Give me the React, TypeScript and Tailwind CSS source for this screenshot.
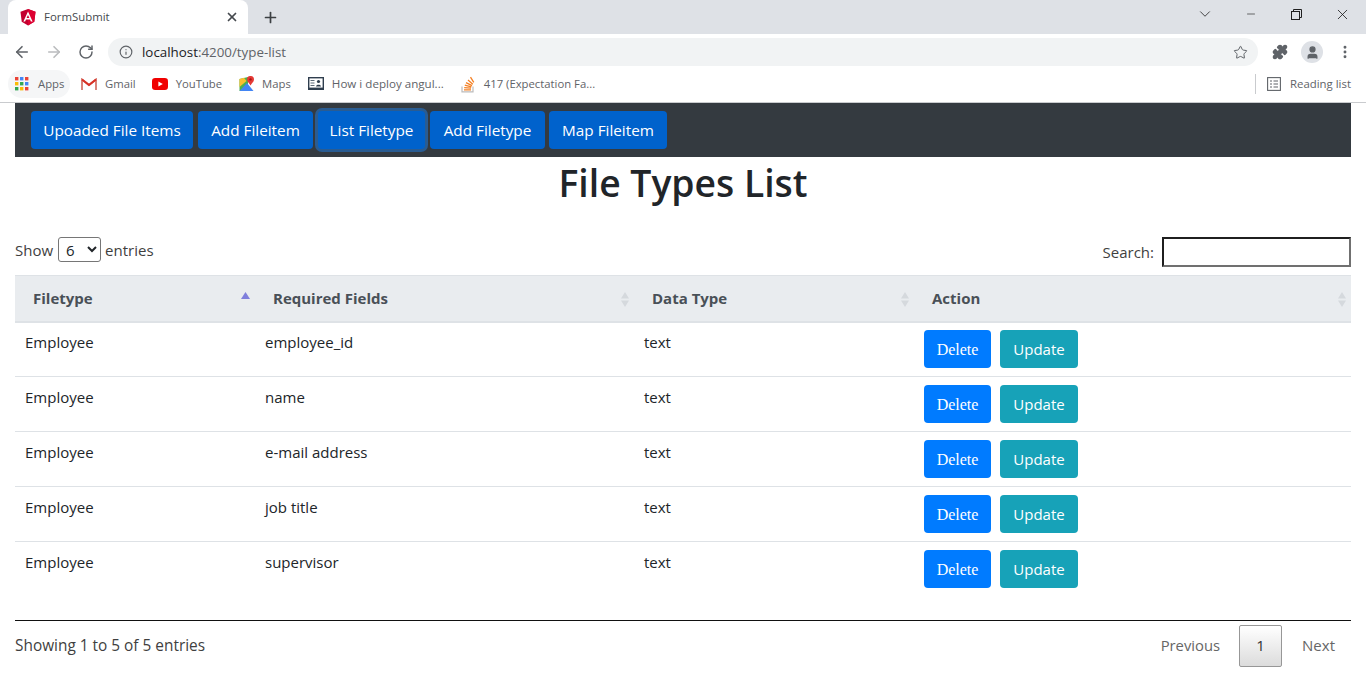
import { ArrowLeft, ArrowRight, RotateCw, Info, Star, X, Plus, ChevronDown, Minus, EllipsisVertical, Puzzle, User } from 'lucide-react';

const NAV_ITEMS = [
   { label: 'Upoaded File Items', width: 'w-[162px]' },
   { label: 'Add Fileitem', width: 'w-[115px]' },
   { label: 'List Filetype', width: 'w-[107px]', focused: true },
   { label: 'Add Filetype', width: 'w-[115px]' },
   { label: 'Map Fileitem', width: 'w-[118px] -ml-px' },
];

const ROWS = ['employee_id', 'name', 'e-mail address', 'job title', 'supervisor'];

const COLUMNS = [
   { label: 'Filetype', width: 'w-[240px]', active: true },
   { label: 'Required Fields', width: 'w-[379px]' },
   { label: 'Data Type', width: 'w-[280px]' },
   { label: 'Action', width: 'w-[437px]' },
];

const AppsIcon = () => (
   <svg width="14" height="14" viewBox="0 0 14 14">
      {[
         ['#ea4335', '#4285f4', '#ea4335'],
         ['#fbbc05', '#34a853', '#4285f4'],
         ['#34a853', '#fbbc05', '#ea4335'],
      ].map((row, y) =>
         row.map((fill, x) => <rect key={`${x}${y}`} x={x * 5} y={y * 5} width="3.4" height="3.4" fill={fill} />)
      )}
   </svg>
);

const AngularIcon = () => (
   <svg width="16" height="17" viewBox="0 0 16 17">
      <path d="M8 0 L15.5 2.7 L14.3 12.8 L8 16.5 L1.7 12.8 L0.5 2.7 Z" fill="#c3002f" />
      <path d="M8 0 L15.5 2.7 L14.3 12.8 L8 16.5 Z" fill="#dd0031" />
      <path d="M8 2.5 L3.4 12.6 H5.1 L6 10.4 H10 L10.9 12.6 H12.6 Z M8 6 L9.4 9.1 H6.6 Z" fill="#fff" fillRule="evenodd" />
   </svg>
);

const GmailIcon = () => (
   <svg width="16" height="13" viewBox="0 0 16 13">
      <path d="M1 12 V1.5 L8 7 L15 1.5 V12" fill="none" stroke="#d9857c" strokeWidth="2" />
      <path d="M1 1.5 L8 7 L15 1.5" fill="none" stroke="#d93025" strokeWidth="2" />
   </svg>
);

const YoutubeIcon = () => (
   <svg width="16" height="12" viewBox="0 0 16 12">
      <rect width="16" height="12" rx="3.2" fill="#f00000" />
      <path d="M6.4 3.4 L10.8 6 L6.4 8.6 Z" fill="#fff" />
   </svg>
);

const MapsIcon = () => (
   <svg width="16" height="16" viewBox="0 0 16 16">
      <path d="M0.5 3 L9 1 V15 L0.5 15 Z" fill="#4caf50" />
      <path d="M0.5 15 L8 7 L14.5 15 Z" fill="#4285f4" />
      <path d="M0.5 3 L5 1.8 L7.5 5 L0.5 11 Z" fill="#fbc02d" />
      <path d="M11.5 0 A3.4 3.4 0 0 1 15 3.4 C15 5.8 12.5 7.2 11.5 9.5 C10.5 7.2 8 5.8 8 3.4 A3.4 3.4 0 0 1 11.5 0 Z" fill="#e53935" />
      <circle cx="11.5" cy="3.4" r="1.2" fill="#a31515" />
   </svg>
);

const BookmarkPageIcon = () => (
   <svg width="16" height="13" viewBox="0 0 16 13">
      <rect x="0.7" y="0.7" width="14.6" height="10.6" fill="#fff" stroke="#2f3e4e" strokeWidth="1.4" />
      <path d="M2.5 3.5 H6.5 M2.5 6 H6.5 M2.5 8.5 H6.5" stroke="#5d6b78" strokeWidth="1" />
      <circle cx="10.5" cy="4.5" r="1.6" fill="#2f3e4e" />
      <path d="M8 9.5 C8 7 13 7 13 9.5 Z" fill="#2f3e4e" />
      <rect x="0" y="11.5" width="16" height="1.5" fill="#2f3e4e" />
   </svg>
);

const StackIcon = () => (
   <svg width="14" height="17" viewBox="0 0 14 17" fill="none">
      <path d="M1 10.5 V15.8 H12 V10.5" stroke="#bcbbbb" strokeWidth="1.2" />
      <path d="M3 13.8 H10 M3.2 11.6 L10 12.2 M3.8 9.2 L10.4 10.8 M5 6.6 L11 9.6 M7 4 L11.8 8.2" stroke="#f48024" strokeWidth="1.3" />
      <path d="M9.5 1.2 L12.8 6.4" stroke="#f48024" strokeWidth="1.3" />
   </svg>
);

const ReadingListIcon = () => (
   <svg width="14" height="14" viewBox="0 0 14 14" fill="none" stroke="#5f6368" strokeWidth="1.1">
      <rect x="0.6" y="0.6" width="12.8" height="12.8" />
      <path d="M3 4 H5 M6.5 4 H11 M3 7 H5 M6.5 7 H11 M3 10 H5 M6.5 10 H11" />
   </svg>
);

const RestoreIcon = () => (
   <svg width="11" height="11" viewBox="0 0 11 11" fill="none" stroke="#1f1f1f" strokeWidth="1">
      <rect x="0.5" y="2.5" width="8" height="8" />
      <path d="M2.5 2.5 V0.5 H10.5 V8.5 H8.5" />
   </svg>
);

const SortArrows = ({ active }: { active?: boolean }) =>
   active ? (
      <svg width="9" height="7" viewBox="0 0 9 7" className="absolute right-[5px] top-[16px]">
         <path d="M4.5 0 L9 7 H0 Z" fill="#7f7fdc" />
      </svg>
   ) : (
      <svg width="8" height="15" viewBox="0 0 8 15" className="absolute right-[5px] top-[16px]">
         <path d="M4 0 L8 6.5 H0 Z M4 15 L0 8.5 H8 Z" fill="#d5d9dd" />
      </svg>
   );

const Bookmark = ({ icon, label, className }: { icon: React.ReactNode; label: string; className: string }) => (
   <div className={`flex items-center gap-2 text-[11.3px] text-[#5f6368] ${className}`}>
      {icon}
      <span>{label}</span>
   </div>
);

const BrowserChrome = () => (
   <div className="font-['Open_Sans',sans-serif]">
      {/* tabs */}
      <div className="h-[34px] bg-[#dee1e6] flex items-end relative">
         <div className="ml-2 w-[240px] h-[34px] bg-white rounded-t-lg flex items-center pl-3 pr-[9px] gap-[8px] mt-0">
            <AngularIcon />
            <span className="text-[11.4px] text-[#45494e] flex-1">FormSubmit</span>
            <X size={14} strokeWidth={3} className="text-[#45494e]" />
         </div>
         <Plus size={17} strokeWidth={2.4} className="text-[#3c4043] ml-[14px] mb-[8px]" />
         <div className="ml-auto flex items-center h-[28px] self-start">
            <ChevronDown size={18} strokeWidth={1.2} className="text-[#333] mr-[31px]" />
            <Minus size={12} strokeWidth={1.2} className="text-[#111] mr-[34px]" />
            <RestoreIcon />
            <X size={17} strokeWidth={1.1} className="text-[#111] ml-[32px] mr-[15px]" />
         </div>
      </div>
      {/* address bar */}
      <div className="h-[34px] pt-[2px] bg-white flex items-center pl-[13px]">
         <ArrowLeft size={18} strokeWidth={2.2} className="text-[#5f6368]" />
         <ArrowRight size={18} strokeWidth={2.2} className="text-[#babcbe] ml-[14px]" />
         <RotateCw size={16} strokeWidth={2.2} className="text-[#5f6368] ml-[15px]" />
         <div className="ml-[14px] w-[1150px] h-[28px] rounded-full bg-[#f1f3f4] flex items-center pl-[11px] pr-[10px]">
            <Info size={14} strokeWidth={2} className="text-[#5f6368]" />
            <span className="ml-[9px] text-[13.35px] text-[#5f6368] flex-1">
               <span className="text-[#202124]">localhost</span>:4200/type-list
            </span>
            <Star size={15} strokeWidth={1.6} className="text-[#5f6368]" />
         </div>
         <Puzzle size={16} className="ml-[14px] text-[#5f6368] fill-[#5f6368]" />
         <div className="ml-[13px] w-[22px] h-[22px] rounded-full bg-[#dee1e6] flex items-center justify-center">
            <User size={15} className="text-[#5f6368] fill-[#5f6368]" />
         </div>
         <EllipsisVertical size={16} strokeWidth={2.4} className="ml-[14px] text-[#5f6368]" />
      </div>
      {/* bookmarks */}
      <div className="h-[32px] pb-[2px] box-content -mb-px bg-white flex items-center border-b border-[#c9cbce]">
         <div className="ml-[8px] h-[28px] w-[62px] rounded-full bg-[#f5f6f7] flex items-center pl-[7px] gap-[9px] text-[11.3px] text-[#5f6368]">
            <AppsIcon />
            <span>Apps</span>
         </div>
         <Bookmark icon={<GmailIcon />} label="Gmail" className="ml-[11px]" />
         <Bookmark icon={<YoutubeIcon />} label="YouTube" className="ml-[16px]" />
         <Bookmark icon={<MapsIcon />} label="Maps" className="ml-[17px] gap-[7px]" />
         <Bookmark icon={<BookmarkPageIcon />} label="How i deploy angul..." className="ml-[17px] text-[11.6px]" />
         <Bookmark icon={<StackIcon />} label="417 (Expectation Fa..." className="ml-[17px] gap-[9px]" />
         <div className="ml-auto flex items-center mr-[15px]">
            <div className="w-px h-[20px] bg-[#c9cbce] mr-[11px]" />
            <ReadingListIcon />
            <span className="ml-[9px] text-[11.4px] text-[#5f6368]">Reading list</span>
         </div>
      </div>
   </div>
);

export default function App() {
   return (
      <div className="h-[677px] overflow-hidden bg-white font-['Open_Sans',sans-serif] text-[#212529]">
         <BrowserChrome />

         <div className="px-[15px] pt-px">
            {/* navbar */}
            <nav className="h-[54px] bg-[#343a40] flex items-center pl-4 gap-[5px]">
               {NAV_ITEMS.map(item => (
                  <button
                     key={item.label}
                     className={`${item.width} h-[38px] rounded bg-[#0062cc] text-white text-[15.3px] ${
                        item.focused ? 'ring-[3px] ring-[#2a5c92]' : ''
                     }`}
                  >
                     {item.label}
                  </button>
               ))}
            </nav>

            <h1 className="-mt-px h-[54px] text-center text-[37.3px] leading-[54px] font-semibold">File Types List</h1>

            {/* controls */}
            <div className="mt-[27px] h-[38px] flex justify-between text-[15px] text-[#3f3f3f]">
               <div className="flex items-start leading-[26px]">
                  <span className="mr-[5px]">Show</span>
                  <select className="w-[43px] h-[25px] border border-[#767676] rounded-[3px] bg-white text-[#212529] text-[15px] pl-[3px] appearance-auto">
                     <option>6</option>
                  </select>
                  <span className="ml-[4px]">entries</span>
               </div>
               <div className="flex items-start">
                  <span className="mt-[4px] mr-2">Search:</span>
                  <input className="w-[189px] h-[30px] border-2 border-t-[#1f1f1f] border-l-[#1f1f1f] border-r-[#707070] border-b-[#707070] bg-white" />
               </div>
            </div>

            {/* table */}
            <table className="w-[1336px] table-fixed border-collapse text-[15px]">
               <thead>
                  <tr className="h-[46px] bg-[#e9ecef] border-t border-b-2 border-[#dee2e6] text-[#495057]">
                     {COLUMNS.map(col => (
                        <th key={col.label} className={`${col.width} relative pl-[18px] text-left font-bold`}>
                           {col.label}
                           <SortArrows active={col.active} />
                        </th>
                     ))}
                  </tr>
               </thead>
               <tbody>
                  {ROWS.map((field, i) => {
                     const cellClass = `pl-[10px] align-top leading-[22px] ${i === 0 ? 'pt-[8px]' : 'pt-[9px]'}`;
                     return (
                        <tr key={field} className={`h-[55px] ${i < ROWS.length - 1 ? 'border-b border-[#dee2e6]' : ''}`}>
                           <td className={cellClass}>Employee</td>
                           <td className={cellClass}>{field}</td>
                           <td className={cellClass}>text</td>
                           <td className="pl-[10px] align-middle">
                              <div className="flex gap-[9px]">
                                 <button className="w-[67px] h-[38px] pt-[2px] rounded bg-[#007bff] text-white text-[16px] font-['Liberation_Serif',serif]">
                                    Delete
                                 </button>
                                 <button className="w-[78px] h-[38px] rounded bg-[#17a2b8] text-white text-[15px]">
                                    Update
                                 </button>
                              </div>
                           </td>
                        </tr>
                     );
                  })}
               </tbody>
            </table>

            {/* footer */}
            <div className="mt-[23px] border-t border-[#111] flex justify-between items-start text-[15.4px]">
               <span className="mt-[13px] text-[#3f3f3f]">Showing 1 to 5 of 5 entries</span>
               <div className="mt-[4px] flex items-center text-[15px] text-[#666]">
                  <span className="mr-[19px] text-[14.8px]">Previous</span>
                  <span className="w-[43px] h-[42px] rounded-[2px] border border-[#979797] bg-gradient-to-b from-white to-[#dcdcdc] flex items-center justify-center text-[#333]">
                     1
                  </span>
                  <span className="ml-[20px] mr-[16px]">Next</span>
               </div>
            </div>
         </div>
      </div>
   );
}
